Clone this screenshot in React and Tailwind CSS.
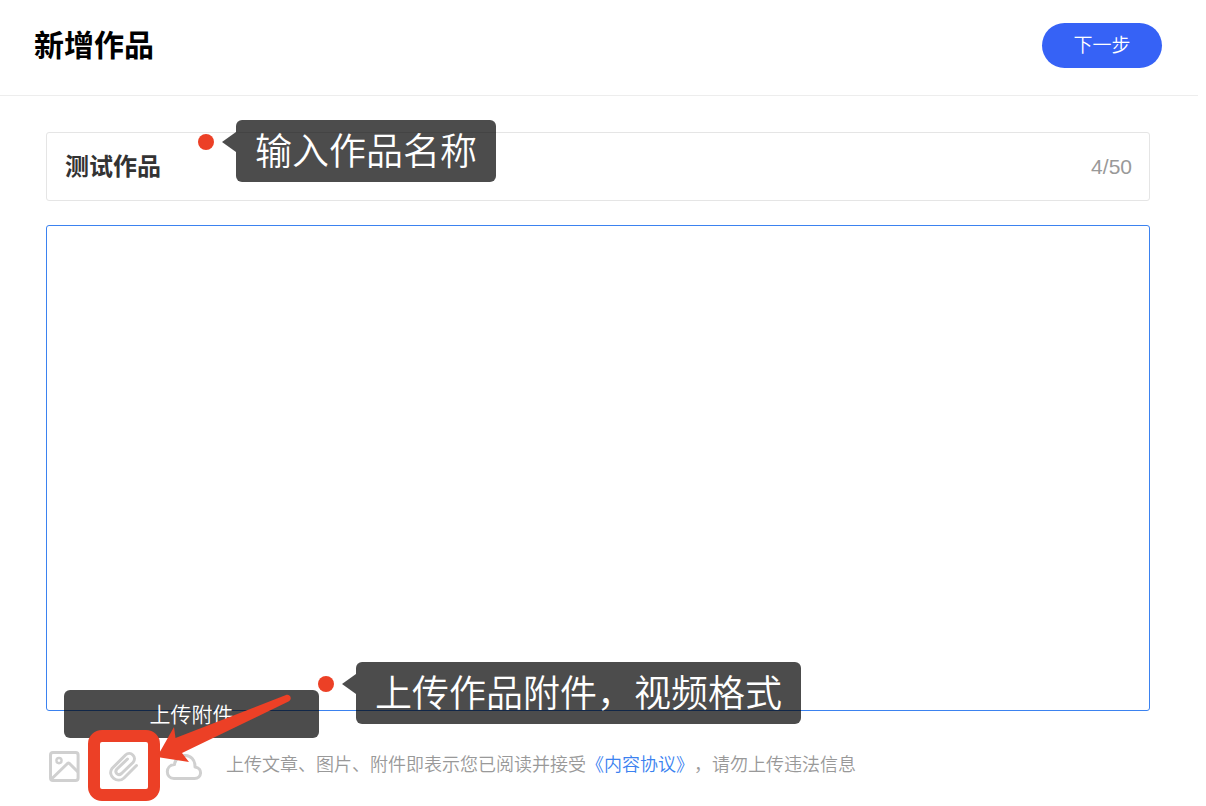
import { useState } from 'react'

const MAX_TITLE = 50

function ImageIcon() {
  return (
    <svg width="32" height="32" viewBox="0 0 32 32" fill="none" stroke="currentColor" strokeWidth="3" aria-hidden="true">
      <rect x="2.5" y="2.500" width="27.600" height="28" rx="2.500" />
      <circle cx="11" cy="10.600" r="2.600" strokeWidth="2.400" />
      <path d="M3.500 29 L19.500 13.500 Q20.500 12.800 21.500 13.500 L30 22" strokeLinejoin="round" />
    </svg>
  )
}

function ClipIcon() {
  return (
    <svg width="32" height="32" viewBox="0 0 32 32" fill="none" stroke="currentColor" strokeWidth="3" strokeLinecap="round" strokeLinejoin="round" aria-hidden="true">
      <path d="M28.500 14.500 L16 27 C9.500 33 -1 25 4 17.500 L17.500 4 C22.500 -0.500 29.500 6 25 11.500 L13.500 22.500 C10 25.500 6 21.500 9 18 L19.500 8" />
    </svg>
  )
}

function CloudIcon() {
  return (
    <svg width="38" height="28" viewBox="0 0 38 28" fill="none" stroke="currentColor" strokeWidth="3" strokeLinejoin="round" aria-hidden="true">
      <path d="M9 25.500 H29.500 C37 25.500 38 15 30 14 C30.500 -1 11 -1 9.500 11.500 C0 12 0 25.500 9 25.500 Z" />
    </svg>
  )
}

function Callout({ children }) {
  return (
    <div className="flex items-start pointer-events-none whitespace-nowrap">
      <span className="mt-[14px] size-4 rounded-full bg-[#ec4026]" />
      <svg className="mt-3 ml-2" width="14" height="20" viewBox="0 0 14 20" aria-hidden="true">
        <path d="M0 10 L14 0 V20 Z" fill="#000" fillOpacity="0.7" />
      </svg>
      <span className="rounded-md bg-black/70 px-[19px] h-[62px] text-[37px] leading-[66px] font-[350] text-white">
        {children}
      </span>
    </div>
  )
}

export default function App() {
  const [title, setTitle] = useState('测试作品')
  const [content, setContent] = useState('')

  return (
    <div className="flex min-h-screen flex-col bg-white pr-2 font-['Liberation_Sans','Noto_Sans_CJK_SC',sans-serif] [text-spacing-trim:space-all]" lang="zh-CN">
      <header className="flex items-center justify-between border-b border-[#ededed] pt-[23px] pb-[27px] pl-[34px] pr-9">
        <h1 className="text-[30px] leading-[45px] font-bold text-black">新增作品</h1>
        <button type="button" className="h-[45px] w-[120px] rounded-full bg-[#3662f6] pt-0.5 text-[19px] font-[350] text-white">
          下一步
        </button>
      </header>

      <main className="flex flex-1 flex-col pt-9 pl-[46px] pr-12">
        <div className="relative flex h-[69px] items-center rounded-[3px] border border-[#e5e5e5] pl-[18px] pr-[17px]">
          <input
            type="text"
            aria-label="作品名称"
            maxLength={MAX_TITLE}
            value={title}
            onChange={e => setTitle(e.target.value)}
            className="min-w-0 flex-1 text-2xl font-bold text-[#333] outline-none"
          />
          <span className="text-[21px] text-[#999]">{title.length}/{MAX_TITLE}</span>
          <div className="absolute left-[151px] -top-[13px]">
            <Callout>输入作品名称</Callout>
          </div>
        </div>

        <div className="relative mt-6 flex flex-1">
          <textarea
            aria-label="作品内容"
            value={content}
            onChange={e => setContent(e.target.value)}
            className="flex-1 resize-none rounded-[3px] border border-[#3b82f0] p-4 text-xl text-[#333] outline-none"
          />
          <div className="absolute left-[272px] -bottom-[13px]">
            <Callout>上传作品附件，视频格式</Callout>
          </div>
        </div>

        <footer className="flex h-[95px] items-start pt-10">
          <button type="button" aria-label="上传图片" className="-mt-px ml-0.5 text-[#d0d0d0]">
            <ImageIcon />
          </button>
          <div className="relative ml-7">
            <div className="absolute -left-11 -top-[61px] h-12 w-[255px] rounded-md bg-black/70 text-center text-[21px] leading-[50px] font-[350] text-white">
              上传附件
            </div>
            <button type="button" aria-label="上传附件" className="block text-[#d0d0d0]">
              <ClipIcon />
            </button>
            <div className="absolute -left-5 -top-[21px] h-[71px] w-[72px] rounded-[14px] border-[12px] border-[#ec4026] pointer-events-none" />
            <svg className="absolute left-12 -top-[61px] z-10 pointer-events-none" width="136" height="76" viewBox="0 0 136 76" fill="#ec4026" aria-hidden="true">
              <path d="M1 67 L18 37 L19.500 48 L130 5 C134 4 137 9 132.500 11.500 L26 63 L33 72 Z" />
            </svg>
          </div>
          <button type="button" aria-label="云盘" className="ml-[25px] mt-0.5 text-[#d0d0d0]">
            <CloudIcon />
          </button>
          <p className="ml-[23px] text-lg font-[350] text-[#999]">
            上传文章、图片、附件即表示您已阅读并接受<a href="#agreement" className="text-[#3b82f0]">《内容协议》</a>，请勿上传违法信息
          </p>
        </footer>
      </main>
    </div>
  )
}
